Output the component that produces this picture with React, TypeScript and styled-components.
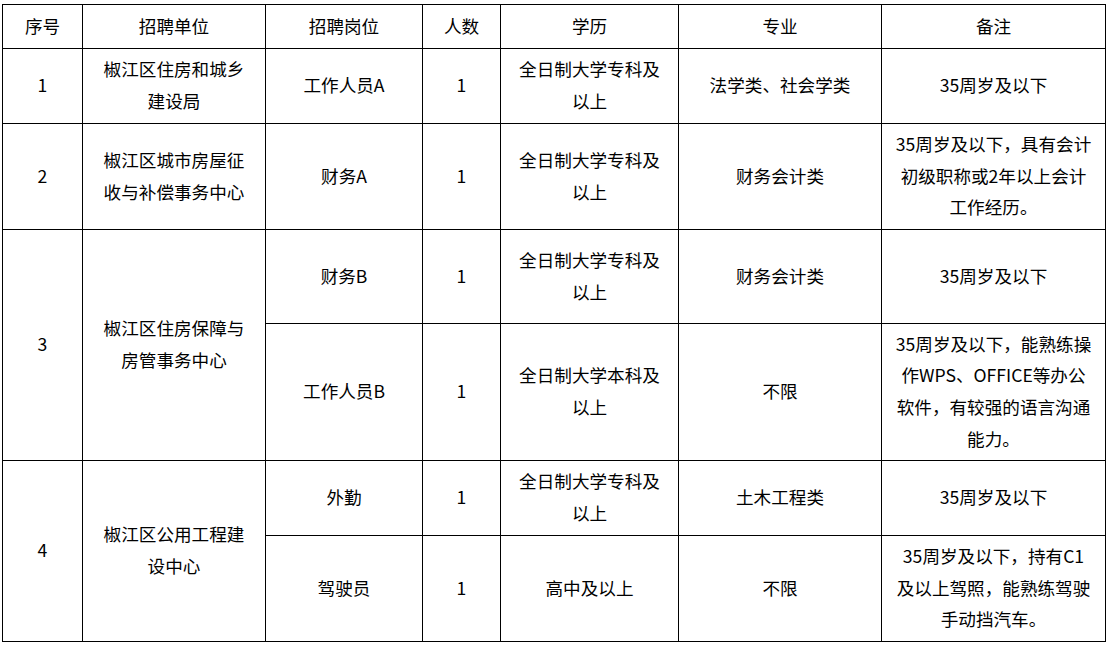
import * as React from "react";
import styled, { createGlobalStyle } from "styled-components";

const GlobalStyle = createGlobalStyle`
  html, body {
    margin: 0;
    padding: 0;
    background: #ffffff;
  }
  body {
    font-family: "Noto Sans CJK SC", "Noto Sans", sans-serif;
    color: #000000;
  }
`;

const Page = styled.div`
  padding: 4px 0 0 2px;
`;

const Table = styled.table`
  width: 1104px;
  border-collapse: collapse;
  table-layout: fixed;
  font-size: 17.6px;
  line-height: 31.7px;
`;

const Row = styled.tr<{ $h: number }>`
  height: ${(p) => p.$h}px;
`;

const Cell = styled.td`
  border: 1px solid #000000;
  padding: 0 6px 2px;
  text-align: center;
  vertical-align: middle;
  white-space: nowrap;
`;

const HeadCell = styled(Cell).attrs({ as: "th" })`
  font-weight: normal;
`;

interface Lines {
  text: string[];
}

const Text: React.FC<Lines> = ({ text }) => (
  <>
    {text.map((line, i) => (
      <React.Fragment key={i}>
        {i > 0 && <br />}
        {line}
      </React.Fragment>
    ))}
  </>
);

const columns = [80, 183, 157, 78, 178, 203, 224];
const headers = ["序号", "招聘单位", "招聘岗位", "人数", "学历", "专业", "备注"];

const zhuanke = ["全日制大学专科及", "以上"];
const under35 = ["35周岁及以下"];

const App: React.FC = () => {
  return (
    <Page>
      <GlobalStyle />
      <Table>
        <colgroup>
          {columns.map((w, i) => (
            <col key={i} style={{ width: w }} />
          ))}
        </colgroup>
        <thead>
          <Row $h={44}>
            {headers.map((h) => (
              <HeadCell key={h}>{h}</HeadCell>
            ))}
          </Row>
        </thead>
        <tbody>
          <Row $h={75}>
            <Cell>1</Cell>
            <Cell>
              <Text text={["椒江区住房和城乡", "建设局"]} />
            </Cell>
            <Cell>工作人员A</Cell>
            <Cell>1</Cell>
            <Cell>
              <Text text={zhuanke} />
            </Cell>
            <Cell>法学类、社会学类</Cell>
            <Cell>
              <Text text={under35} />
            </Cell>
          </Row>
          <Row $h={106}>
            <Cell>2</Cell>
            <Cell>
              <Text text={["椒江区城市房屋征", "收与补偿事务中心"]} />
            </Cell>
            <Cell>财务A</Cell>
            <Cell>1</Cell>
            <Cell>
              <Text text={zhuanke} />
            </Cell>
            <Cell>财务会计类</Cell>
            <Cell>
              <Text text={["35周岁及以下，具有会计", "初级职称或2年以上会计", "工作经历。"]} />
            </Cell>
          </Row>
          <Row $h={94}>
            <Cell rowSpan={2}>3</Cell>
            <Cell rowSpan={2}>
              <Text text={["椒江区住房保障与", "房管事务中心"]} />
            </Cell>
            <Cell>财务B</Cell>
            <Cell>1</Cell>
            <Cell>
              <Text text={zhuanke} />
            </Cell>
            <Cell>财务会计类</Cell>
            <Cell>
              <Text text={under35} />
            </Cell>
          </Row>
          <Row $h={137}>
            <Cell>工作人员B</Cell>
            <Cell>1</Cell>
            <Cell>
              <Text text={["全日制大学本科及", "以上"]} />
            </Cell>
            <Cell>不限</Cell>
            <Cell>
              <Text
                text={["35周岁及以下，能熟练操", "作WPS、OFFICE等办公", "软件，有较强的语言沟通", "能力。"]}
              />
            </Cell>
          </Row>
          <Row $h={75}>
            <Cell rowSpan={2}>4</Cell>
            <Cell rowSpan={2}>
              <Text text={["椒江区公用工程建", "设中心"]} />
            </Cell>
            <Cell>外勤</Cell>
            <Cell>1</Cell>
            <Cell>
              <Text text={zhuanke} />
            </Cell>
            <Cell>土木工程类</Cell>
            <Cell>
              <Text text={under35} />
            </Cell>
          </Row>
          <Row $h={106}>
            <Cell>驾驶员</Cell>
            <Cell>1</Cell>
            <Cell>高中及以上</Cell>
            <Cell>不限</Cell>
            <Cell>
              <Text text={["35周岁及以下，持有C1", "及以上驾照，能熟练驾驶", "手动挡汽车。"]} />
            </Cell>
          </Row>
        </tbody>
      </Table>
    </Page>
  );
};

export default App;
